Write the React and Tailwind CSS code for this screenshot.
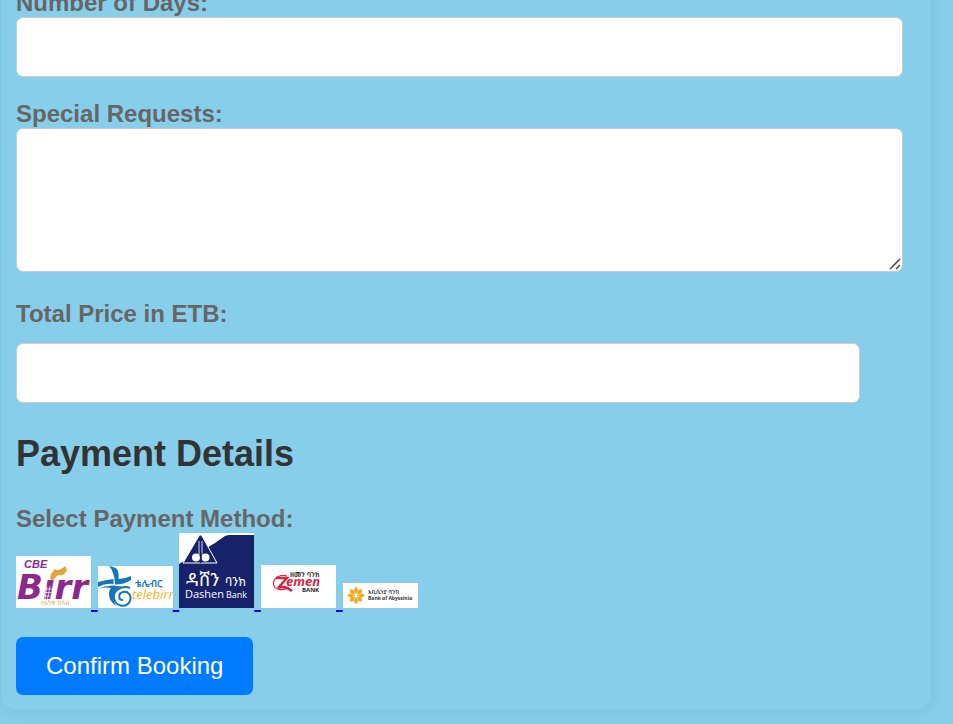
const labelClass = "block text-2xl leading-7 font-bold text-[#666]";
const fieldClass = "block w-full rounded-[7px] border border-[#ccc] bg-white px-4 text-2xl text-[#333] outline-none";

function CbeBirrLogo() {
  return (
    <svg role="img" aria-label="CBE Birr" width="75" height="52" viewBox="0 0 75 52" className="inline-block align-baseline">
      <rect width="75" height="52" fill="#fff" />
      <text x="1" y="43" fontFamily="DejaVu Sans, sans-serif" fontWeight="700" fontStyle="italic" fontSize="34" fill="#8b2a8c">Birr</text>
      <path d="M29 14 H48 V22.500 H29Z" fill="#fff" />
      <text x="8" y="12" fontFamily="Liberation Sans, Arial, sans-serif" fontWeight="700" fontStyle="italic" fontSize="11" fill="#8b2a8c">CBE</text>
      <path d="M35 18 L39 13 Q43 16 49 10 L51 14 Q48 21 42 19 L37 24 L34 23Z" fill="#e2a33b" />
      <path d="M28 33 H36 M27 36.500 H35 M26 40 H34 M31 30 L29 43 M34 30 L31.500 43" stroke="#fff" strokeWidth=".7" />
      <text x="25" y="49" fontFamily="Noto Sans Ethiopic, Liberation Sans, sans-serif" fontSize="6" fill="#e2a33b">በአካት ህሳብ</text>
    </svg>
  );
}

function TelebirrLogo() {
  return (
    <svg role="img" aria-label="telebirr" width="75" height="42" viewBox="0 0 75 42" className="inline-block align-baseline">
      <rect width="75" height="42" fill="#fff" />
      <g fill="#1376bb">
        <path d="M11 0 Q19 1 20 5 Q21 10 20.500 13 Q27 13 33 10 V14 Q26 18.500 17 18.500 Q17 12 15 7 Q14 3 11 0Z" />
        <path d="M0 16 Q8 14 15.500 13 V18 Q7 17 0 21Z" />
        <path d="M0 23 Q8 19 16 19.500 Q19 20.500 24 20 Q17 23 16 29 Q15 35 18 40 Q10 34 11 27 Q11 24 13 22 Q7 20.500 0 23Z" />
      </g>
      <path d="M32 22 C24 19 15 24 16 32 C17 40 28 43 32 35 C34 29 30 25 25 26 C20 27 20 34 25 34" fill="none" stroke="#1376bb" strokeWidth="2" />
      <text x="37" y="21" fontFamily="Noto Sans Ethiopic, Liberation Sans, sans-serif" fontWeight="600" fontSize="10" fill="#1376bb">ቴሌብር</text>
      <text x="34" y="33" fontFamily="Open Sans, sans-serif" fontStyle="italic" fontWeight="500" fontSize="13" fill="#f5b52a">telebirr</text>
    </svg>
  );
}

function DashenLogo() {
  return (
    <svg role="img" aria-label="Dashen Bank" width="75" height="75" viewBox="0 0 75 75" className="inline-block align-baseline">
      <rect width="75" height="75" fill="#fff" />
      <path d="M0 31 L36 10 L46 3 Q48 2 51 2 H75 V75 H0Z" fill="#18226b" />
      <path d="M20.500 2 L4 30 H38 L22.500 2Z" fill="#18226b" stroke="#fff" strokeWidth="1" />
      <path d="M20 8 V22 M23 8 V22" stroke="#fff" strokeWidth=".8" />
      <circle cx="17" cy="24.500" r="4" fill="#fff" />
      <circle cx="26.500" cy="24.500" r="4" fill="#fff" />
      <path d="M21.700 19 V30" stroke="#18226b" strokeWidth="1.500" />
      <g fill="#fff">
        <text x="7" y="53" fontFamily="Noto Sans Ethiopic, Liberation Sans, sans-serif" fontSize="18">ዳሸን</text>
        <text x="46" y="53" fontFamily="Noto Sans Ethiopic, Liberation Sans, sans-serif" fontSize="12">ባንክ</text>
        <text x="6" y="65" fontFamily="Open Sans, sans-serif" fontWeight="500" fontSize="11">Dashen</text>
        <text x="47" y="65" fontFamily="Open Sans, sans-serif" fontWeight="500" fontSize="9">Bank</text>
      </g>
    </svg>
  );
}

function ZemenLogo() {
  return (
    <svg role="img" aria-label="Zemen Bank" width="75" height="43" viewBox="0 0 75 43" className="inline-block align-baseline">
      <rect width="75" height="43" fill="#fff" />
      <text x="29" y="12" fontFamily="Noto Sans Ethiopic, Liberation Sans, sans-serif" fontWeight="600" fontSize="7" fill="#222">ዘመን ባንክ</text>
      <path d="M26 11 C19 9 12 13 12.500 19 C13 25 21 26 28 23" fill="none" stroke="#d92344" strokeWidth="1.200" />
      <path d="M15 13 H26 L17 23 Q24 20 31 26" fill="none" stroke="#d92344" strokeWidth="2.400" />
      <text x="25" y="21" fontFamily="Open Sans, sans-serif" fontWeight="700" fontStyle="italic" fontSize="13" fill="#d92344">emen</text>
      <text x="41" y="27" fontFamily="Open Sans, sans-serif" fontWeight="700" fontSize="6" fill="#222">BANK</text>
    </svg>
  );
}

function AbyssiniaLogo() {
  return (
    <svg role="img" aria-label="Bank of Abyssinia" width="75" height="25" viewBox="0 0 75 25" className="inline-block align-baseline">
      <rect width="75" height="25" fill="#fff" />
      <g fill="#f6a81c">
        {[0, 45, 90, 135, 180, 225, 270, 315].map((angle) => (
          <path key={angle} d="M13 11.500 L10.800 7 L13 3.500 L15.200 7Z" transform={`rotate(${angle} 13 12.500)`} />
        ))}
      </g>
      <text x="25" y="11" fontFamily="Noto Sans Ethiopic, Liberation Sans, sans-serif" fontWeight="600" fontSize="6" fill="#333">አቢሲንያ ባንክ</text>
      <text x="25" y="17" fontFamily="Open Sans, sans-serif" fontWeight="700" fontSize="5" fill="#333">Bank of Abyssinia</text>
    </svg>
  );
}

export default function App() {
  return (
    <div className="min-h-screen overflow-hidden bg-[#87ceeb] font-['Liberation_Sans',Arial,sans-serif]">
      <form className="mr-[22px] mb-[14px] ml-px rounded-b-2xl pr-7 pb-[15px] pl-[15px] shadow-[0_0_16px_rgba(0,0,0,0.1)]" onSubmit={(e) => e.preventDefault()}>
        <div className="-mt-[11px]">
          <label htmlFor="days" className={labelClass}>Number of Days:</label>
          <input id="days" type="text" inputMode="numeric" className={`${fieldClass} h-[60px]`} />
        </div>

        <div className="mt-[23px]">
          <label htmlFor="requests" className={labelClass}>Special Requests:</label>
          <div className="relative">
            <textarea id="requests" className={`${fieldClass} h-36 resize-none`} />
            <svg aria-hidden="true" width="12" height="12" viewBox="0 0 12 12" className="pointer-events-none absolute right-0.5 bottom-0.5">
              <path d="M1 11 L11 1 M7 11 L11 7" stroke="#444" strokeWidth="1.500" fill="none" />
            </svg>
          </div>
        </div>

        <div className="mt-7 mr-[43px]">
          <label htmlFor="total" className={labelClass}>Total Price in ETB:</label>
          <input id="total" type="text" readOnly className={`${fieldClass} mt-[15px] h-[60px]`} />
        </div>

        <h2 className="mt-[30px] text-4xl leading-[42px] font-bold text-[#333]">Payment Details</h2>

        <div role="group" aria-labelledby="payment-method" className="mt-[30px]">
          <div id="payment-method" className={labelClass}>Select Payment Method:</div>
          <div className="text-2xl leading-7 text-[#0000ee]">
            <a href="#cbe" className="underline"><CbeBirrLogo />{" "}</a>
            <a href="#telebirr" className="underline"><TelebirrLogo />{" "}</a>
            <a href="#dashen" className="underline"><DashenLogo />{" "}</a>
            <a href="#zemen" className="underline"><ZemenLogo />{" "}</a>
            <a href="#abyssinia"><AbyssiniaLogo /></a>
          </div>
        </div>

        <button type="submit" className="mt-[23px] h-[58px] rounded-[7px] bg-[#007bff] px-[30px] text-2xl text-white">Confirm Booking</button>
      </form>
    </div>
  );
}
